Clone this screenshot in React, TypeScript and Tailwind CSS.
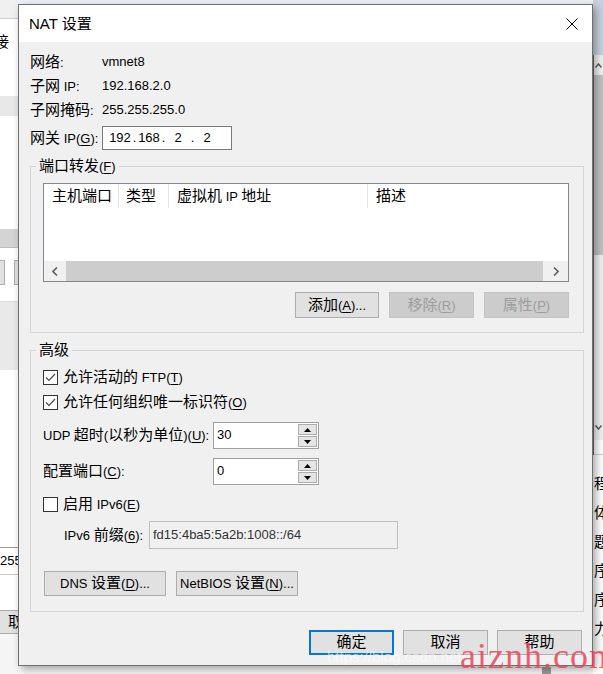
import React from 'react';

const CJK = /([\u3400-\u9fff]+)/;

// CJK runs are a bit bigger than the latin text in the original dialog
function T({ s }: { s: string }) {
  return (
    <>
      {s.split(CJK).map((p, i) =>
        i % 2 === 1 ? (
          <span key={i} className="text-[15px]">
            {p}
          </span>
        ) : (
          <React.Fragment key={i}>{p}</React.Fragment>
        )
      )}
    </>
  );
}

function L({ a, u, b = '' }: { a: string; u?: string; b?: string }) {
  return (
    <span>
      <T s={a} />
      {u && <u className="underline-offset-2">{u}</u>}
      <T s={b} />
    </span>
  );
}

function Check({ on }: { on?: boolean }) {
  return (
    <span className="flex h-[15px] w-[15px] shrink-0 items-center justify-center border border-[#333333] bg-white">
      {on && (
        <svg width="11" height="9" viewBox="0 0 11 9">
          <path d="M1 4.5 L4 7.5 L10 1" fill="none" stroke="#4a4a4a" strokeWidth="1.2" />
        </svg>
      )}
    </span>
  );
}

function Spin({ v }: { v: string }) {
  return (
    <div className="flex h-[27px] w-[106px] border border-[#a0a0a0] bg-white">
      <div className="flex-1 pl-[3px] pt-[4px] leading-[15px]">{v}</div>
      <div className="flex w-[21px] flex-col gap-[1px] p-[1px]">
        <div className="flex flex-1 items-center justify-center border border-[#acacac] bg-[#e5e5e5]">
          <svg width="7" height="4" viewBox="0 0 7 4">
            <path d="M0 4 L3.5 0 L7 4 Z" fill="#000" />
          </svg>
        </div>
        <div className="flex flex-1 items-center justify-center border border-[#acacac] bg-[#e5e5e5]">
          <svg width="7" height="4" viewBox="0 0 7 4">
            <path d="M0 0 L3.5 4 L7 0 Z" fill="#000" />
          </svg>
        </div>
      </div>
    </div>
  );
}

function Btn({ className, children }: { className: string; children: React.ReactNode }) {
  return (
    <div className={`flex items-center justify-center ${className}`}>
      <span>{children}</span>
    </div>
  );
}

const Chev = ({ d }: { d: string }) => (
  <svg width="6" height="9" viewBox="0 0 6 9">
    <path d={d} fill="none" stroke="#606060" strokeWidth="1.6" />
  </svg>
);

export default function App() {
  return (
    <div className="relative flex h-[674px] w-[603px] overflow-hidden bg-white font-['Liberation_Sans','Noto_Sans_CJK_SC',sans-serif] text-[13px] leading-[18px] text-black">
      {/* window behind, left edge */}
      <div className="flex w-[18px] shrink-0 flex-col overflow-hidden">
        <div className="h-[19px] border-b border-[#cfcfcf] bg-[#f0f0f0]" />
        <div className="h-[77px] bg-white pt-[14px]">
          <span className="-ml-[6px] block text-[15px]">接</span>
        </div>
        <div className="h-[20px] bg-[#e8e8e8]" />
        <div className="h-[113px] bg-white" />
        <div className="h-[19px] border-b border-[#bdbdbd] bg-[#d4d4d4]" />
        <div className="h-[12px] bg-white" />
        <div className="flex h-[25px] bg-white">
          <div className="w-[5px] border-y border-r border-[#adadad] bg-[#e1e1e1]" />
          <div className="ml-[9px] w-[4px] border-y border-l border-[#adadad] bg-[#e1e1e1]" />
        </div>
        <div className="h-[17px] border-b border-[#dcdcdc] bg-white" />
        <div className="h-[68px] bg-[#e9e9e9]" />
        <div className="h-[178px] border-b border-[#9a9a9a] bg-white" />
        <div className="h-[27px] border-b border-[#c8c8c8] bg-white pt-[4px]">255</div>
        <div className="h-[35px] bg-white" />
        <div className="h-[24px] border-y border-[#adadad] bg-[#e1e1e1] pl-[8px]">
          <span className="text-[15px] leading-[22px]">取</span>
        </div>
        <div className="flex-1 bg-[#f5f5f5]" />
      </div>

      {/* window behind, middle */}
      <div className="flex flex-1 flex-col">
        <div className="h-[4px] bg-[#eef1f5]" />
        <div className="flex-1 bg-white" />
        <div className="flex h-[8px] items-end bg-[#f6f6f6]">
          <div className="ml-[524px] h-[7px] w-[9px] bg-[#9a9a9a]" />
        </div>
      </div>

      {/* window behind, right edge */}
      <div className="flex w-[10px] shrink-0 flex-col overflow-hidden">
        <div className="h-[55px] bg-[#c8d1dc]" />
        <div className="flex flex-col border-l border-[#6d6d6d]">
          <div className="flex h-[20px] items-center justify-center bg-[#f0f0f0]">
            <svg width="7" height="5" viewBox="0 0 7 5">
              <path d="M0.5 4.5 L3.5 1 L6.5 4.5" fill="none" stroke="#555" strokeWidth="1.4" />
            </svg>
          </div>
          <div className="h-[180px] bg-[#c1c1c1]" />
          <div className="h-[160px] bg-[#f0f0f0]" />
          <div className="flex h-[25px] items-center justify-center bg-[#f0f0f0]">
            <svg width="7" height="5" viewBox="0 0 7 5">
              <path d="M0.5 0.5 L3.5 4 L6.5 0.5" fill="none" stroke="#555" strokeWidth="1.4" />
            </svg>
          </div>
          <div className="h-[15px] border-b border-[#d0d0d0] bg-white" />
        </div>
        <div className="flex flex-col pl-[1px] pt-[14px] text-[15px] leading-[29px]">
          <span>程</span>
          <span>体</span>
          <span>题</span>
          <span>序</span>
          <span>序</span>
          <span>力</span>
        </div>
      </div>

      {/* NAT dialog */}
      <div className="absolute left-[18px] top-[4px] flex h-[662px] w-[575px] flex-col border border-[#707070] bg-[#f0f0f0] shadow-[3px_3px_8px_rgba(0,0,0,0.35)]">
        <div className="flex h-[37px] shrink-0 items-center justify-between bg-white pl-[10px] pr-[14px]">
          <span className="text-[15px]">NAT 设置</span>
          <svg width="12" height="12" viewBox="0 0 12 12">
            <path d="M0.5 0.5 L11.5 11.5 M11.5 0.5 L0.5 11.5" stroke="#000" strokeWidth="1" />
          </svg>
        </div>

        <div className="flex flex-1 flex-col pl-[11px] pr-[8px] pt-[8px]">
          {[
            ['网络:', 'vmnet8'],
            ['子网 IP:', '192.168.2.0'],
            ['子网掩码:', '255.255.255.0'],
          ].map(([k, v]) => (
            <div key={k} className="flex h-[24px] items-center">
              <span className="w-[72px]">
                <T s={k} />
              </span>
              <span>{v}</span>
            </div>
          ))}
          <div className="mt-[4px] flex h-[24px] items-center">
            <span className="w-[72px]">
              <L a="网关 IP(" u="G" b="):" />
            </span>
            <div className="flex h-[24px] w-[130px] items-center border border-[#7a7a7a] bg-white pl-[5px]">
              <span className="w-[24px] text-center">192</span>
              <span className="w-[5px] text-center">.</span>
              <span className="w-[24px] text-center">168</span>
              <span className="w-[5px] text-center">.</span>
              <span className="w-[24px] text-center">2</span>
              <span className="w-[5px] text-center">.</span>
              <span className="w-[24px] text-center">2</span>
            </div>
          </div>

          {/* port forwarding */}
          <fieldset className="mt-[7px] border border-[#d5d5d5]">
            <legend className="ml-[5px] px-[3px] leading-[18px]">
              <L a="端口转发(" u="F" b=")" />
            </legend>
            <div className="flex flex-col pb-[14px] pl-[12px] pr-[14px] pt-[7px]">
              <div className="flex h-[99px] flex-col border border-[#828790] bg-white">
                <div className="flex h-[24px]">
                  <div className="flex w-[75px] items-center border-r border-[#e5e5e5] pl-[8px]">
                    <span>
                      <T s="主机端口" />
                    </span>
                  </div>
                  <div className="flex w-[50px] items-center border-r border-[#e5e5e5] pl-[7px]">
                    <span>
                      <T s="类型" />
                    </span>
                  </div>
                  <div className="flex w-[199px] items-center border-r border-[#e5e5e5] pl-[8px]">
                    <span>
                      <T s="虚拟机 IP 地址" />
                    </span>
                  </div>
                  <div className="flex flex-1 items-center pl-[8px]">
                    <span>
                      <T s="描述" />
                    </span>
                  </div>
                </div>
                <div className="flex-1" />
                <div className="flex h-[20px] bg-[#f0f0f0]">
                  <div className="flex w-[22px] items-center justify-center">
                    <Chev d="M5 0.5 L1 4.5 L5 8.5" />
                  </div>
                  <div className="flex-1 bg-[#cdcdcd]" />
                  <div className="flex w-[25px] items-center justify-center">
                    <Chev d="M1 0.5 L5 4.5 L1 8.5" />
                  </div>
                </div>
              </div>
              <div className="mt-[10px] flex justify-end gap-[10px]">
                <Btn className="h-[26px] w-[84px] border border-[#adadad] bg-[#e1e1e1]">
                  <L a="添加(" u="A" b=")..." />
                </Btn>
                <Btn className="h-[26px] w-[85px] border border-[#c4c4c4] bg-[#cccccc] text-[#9d9d9d]">
                  <L a="移除(" u="R" b=")" />
                </Btn>
                <Btn className="h-[26px] w-[85px] border border-[#c4c4c4] bg-[#cccccc] text-[#9d9d9d]">
                  <L a="属性(" u="P" b=")" />
                </Btn>
              </div>
            </div>
          </fieldset>

          {/* advanced */}
          <fieldset className="mt-[8px] border border-[#d5d5d5]">
            <legend className="ml-[5px] px-[3px] leading-[18px]">
              <T s="高级" />
            </legend>
            <div className="flex flex-col pb-[15px] pl-[12px] pt-[5px]">
              <div className="flex h-[24px] items-center gap-[5px]">
                <Check on />
                <L a="允许活动的 FTP(" u="T" b=")" />
              </div>
              <div className="mt-[1px] flex h-[24px] items-center gap-[5px]">
                <Check on />
                <L a="允许任何组织唯一标识符(" u="O" b=")" />
              </div>
              <div className="mt-[8px] flex h-[27px] items-center">
                <span className="w-[170px]">
                  <L a="UDP 超时(以秒为单位)(" u="U" b="):" />
                </span>
                <Spin v="30" />
              </div>
              <div className="mt-[9px] flex h-[27px] items-center">
                <span className="w-[170px]">
                  <L a="配置端口(" u="C" b="):" />
                </span>
                <Spin v="0" />
              </div>
              <div className="mt-[7px] flex h-[24px] items-center gap-[5px]">
                <Check />
                <L a="启用 IPv6(" u="E" b=")" />
              </div>
              <div className="mt-[5px] flex h-[28px] items-center pl-[21px]">
                <span className="w-[85px]">
                  <L a="IPv6 前缀(" u="6" b="):" />
                </span>
                <div className="h-[28px] w-[249px] border border-[#bfbfbf] bg-[#f0f0f0] pl-[3px] pt-[4px] text-[#333333]">
                  fd15:4ba5:5a2b:1008::/64
                </div>
              </div>
              <div className="ml-[1px] mt-[22px] flex gap-[10px]">
                <Btn className="h-[25px] w-[122px] border border-[#adadad] bg-[#e1e1e1]">
                  <L a="DNS 设置(" u="D" b=")..." />
                </Btn>
                <Btn className="h-[25px] w-[122px] border border-[#adadad] bg-[#e1e1e1]">
                  <L a="NetBIOS 设置(" u="N" b=")..." />
                </Btn>
              </div>
            </div>
          </fieldset>

          <div className="mt-[18px] flex justify-end gap-[9px] pr-[2px]">
            <Btn className="h-[25px] w-[85px] border-2 border-[#0078d7] bg-[#e1e1e1]">
              <T s="确定" />
            </Btn>
            <Btn className="h-[25px] w-[85px] border border-[#adadad] bg-[#e1e1e1]">
              <T s="取消" />
            </Btn>
            <Btn className="h-[25px] w-[85px] border border-[#adadad] bg-[#e1e1e1]">
              <T s="帮助" />
            </Btn>
          </div>
        </div>
      </div>

      {/* watermarks */}
      <div className="absolute left-[327px] top-[648px] text-[15px] text-white/60">https://blog.csdn.net/</div>
      <div className="absolute left-[460px] top-[638px] whitespace-nowrap font-['Liberation_Serif',serif] text-[36px] leading-none tracking-[1px] text-[#e8455a]/85">
        aiznh.com
      </div>
    </div>
  );
}
